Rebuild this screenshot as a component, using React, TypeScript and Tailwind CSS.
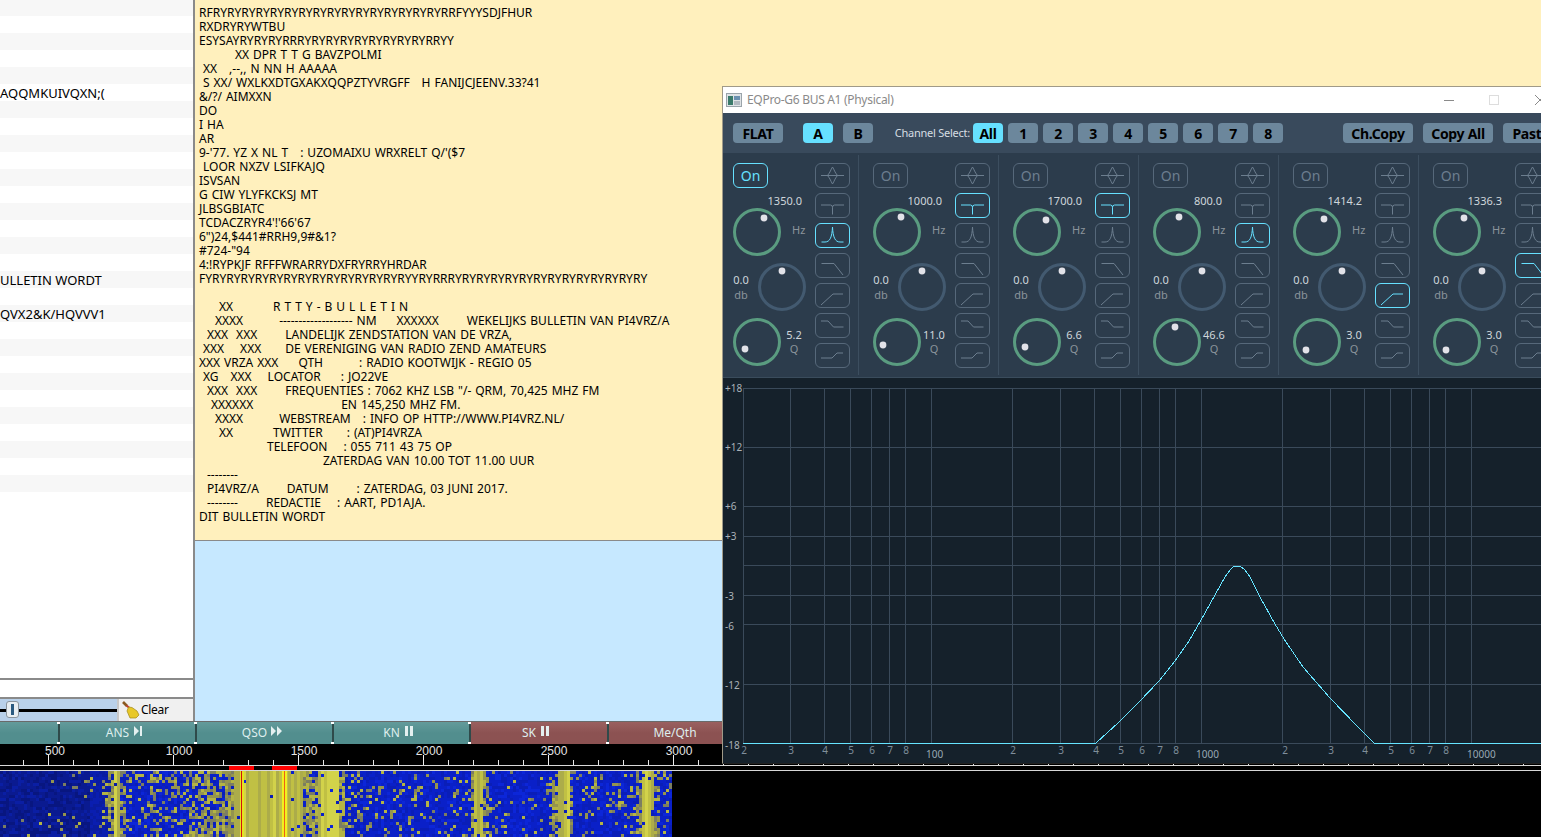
import React from "react";

const font = { fontFamily: '"Noto Sans", "Liberation Sans", Arial, sans-serif' };
const rulerFont = { fontFamily: '"Liberation Sans", Arial, sans-serif' };

const LINES = [
  "RFRYRYRYRYRYRYRYRYRYRYRYRYRYRYRYRYRRFYYYSDJFHUR",
  "RXDRYRYWTBU",
  "ESYSAYRYRYRYRRRYRYRYRYRYRYRYRYRYRRYY",
  "         XX DPR T T G BAVZPOLMI",
  " XX   ,--,, N NN H AAAAA",
  " S XX/ WXLKXDTGXAKXQQPZTYVRGFF   H FANIJCJEENV.33?41",
  "&/?/ AIMXXN",
  "DO",
  "I HA",
  "AR",
  "9-'77. YZ X NL T   : UZOMAIXU WRXRELT Q/'($7",
  " LOOR NXZV LSIFKAJQ",
  "ISVSAN",
  "G CIW YLYFKCKSJ MT",
  "JLBSGBIATC",
  "TCDACZRYR4'!'66'67",
  "6\")24,$441#RRH9,9#&1?",
  "#724-\"94",
  "4:!RYPKJF RFFFWRARRYDXFRYRRYHRDAR",
  "FYRYRYRYRYRYRYRYRYRYRYRYRYRYRYYRYRRRYRYRYRYRYRYRYRYRYRYRYRYRYRY",
  " ",
  "     XX          R T T Y - B U L L E T I N",
  "    XXXX         ------------------- NM     XXXXXX       WEKELIJKS BULLETIN VAN PI4VRZ/A",
  "  XXX  XXX       LANDELIJK ZENDSTATION VAN DE VRZA,",
  " XXX    XXX      DE VERENIGING VAN RADIO ZEND AMATEURS",
  "XXX VRZA XXX     QTH         : RADIO KOOTWIJK - REGIO 05",
  " XG   XXX    LOCATOR     : JO22VE",
  "  XXX  XXX       FREQUENTIES : 7062 KHZ LSB \"/- QRM, 70,425 MHZ FM",
  "   XXXXXX                      EN 145,250 MHZ FM.",
  "    XXXX         WEBSTREAM   : INFO OP HTTP://WWW.PI4VRZ.NL/",
  "     XX          TWITTER      : (AT)PI4VRZA",
  "                 TELEFOON    : 055 711 43 75 OP",
  "                               ZATERDAG VAN 10.00 TOT 11.00 UUR",
  "  --------",
  "  PI4VRZ/A       DATUM       : ZATERDAG, 03 JUNI 2017.",
  "  --------       REDACTIE    : AART, PD1AJA.",
  "DIT BULLETIN WORDT",
];

const ROWS: Record<number, string> = { 5: "AQQMKUIVQXN;(", 16: "ULLETIN WORDT", 18: "QVX2&K/HQVVV1" };

function LeftList() {
  const rows = [];
  for (let i = 0; i < 29; i++) {
    rows.push(
      <div key={i} className={`${i === 0 ? "h-[16px]" : "h-[17px]"} ${i % 2 === 0 ? "bg-[#f7f7f7]" : "bg-white"} text-[13px] leading-[18px] text-black whitespace-pre`}>
        {ROWS[i] || ""}
      </div>
    );
  }
  return <div className="flex-1 bg-white overflow-hidden border-b-2 border-[#8a8a8a]">{rows}</div>;
}

function Broom() {
  return (
    <svg width="18" height="18" viewBox="0 0 18 18" className="shrink-0">
      <path d="M1 1 L5 5" stroke="#8a5a20" strokeWidth="2.6" />
      <path d="M4.5 4.5 L7.5 7" stroke="#c04030" strokeWidth="2.2" />
      <path d="M6.5 6 L5 10 L8 17 L14 17 L17 14 L15 10 L10 6.5 Z" fill="#e8c828" stroke="#a08818" strokeWidth="0.7" />
    </svg>
  );
}

function BarIcon({ kind }: { kind: "skip" | "ff" | "pause" }) {
  return (
    <svg width="12" height="12" viewBox="0 0 12 12" className="ml-[4px] -mt-[5px] shrink-0">
      {kind === "skip" && <path d="M1 1 L6 6 L1 11 Z M7 1 H9 V11 H7 Z" fill="#e4f0f0" />}
      {kind === "ff" && <path d="M0 1 L5 6 L0 11 Z M6 1 L11 6 L6 11 Z" fill="#e4f0f0" />}
      {kind === "pause" && <path d="M1 1 H4 V11 H1 Z M6 1 H9 V11 H6 Z" fill="#e4f0f0" />}
    </svg>
  );
}

function MacroButton({ w, label, icon, red }: { w: string; label?: string; icon?: "skip" | "ff" | "pause"; red?: boolean }) {
  return (
    <div className={`relative ${w} shrink-0 h-full flex items-center justify-center pr-[4px] text-[12px] text-[#dfeeee] border-r-2 border-[#2f4a4a] ${red ? "bg-gradient-to-b from-[#9a6060] via-[#8c5252] to-[#8c5252]" : "bg-gradient-to-b from-[#639b9b] via-[#528e8e] to-[#528e8e]"}`}>
      {label}
      {icon && <BarIcon kind={icon} />}
      <span className="absolute -right-[3px] top-0 w-[4px] h-[2px] bg-white" />
      <span className="absolute -right-[3px] bottom-0 w-[4px] h-[2px] bg-white" />
    </div>
  );
}

function Ruler() {
  const minor = [];
  for (let x = 23; x < 1541; x += 25) minor.push(x);
  const labels = [[55, "500"], [179, "1000"], [304, "1500"], [429, "2000"], [554, "2500"], [679, "3000"]] as const;
  return (
    <svg width="1541" height="21" viewBox="0 744 1541 21" className="block bg-black">
      {minor.map((x) => <line key={x} x1={x + 0.5} x2={x + 0.5} y1="760" y2="765" stroke="#e8e8e8" />)}
      {[48, 173, 298, 423, 548, 673].map((x) => <line key={x} x1={x + 0.5} x2={x + 0.5} y1="755" y2="765" stroke="#f0f0f0" />)}
      {labels.map(([x, t]) => <text key={t} x={x} y="755" textAnchor="middle" fontSize="12" fill="#e4e4e4" style={rulerFont}>{t}</text>)}
    </svg>
  );
}

function mulberry(seed: number) {
  return () => {
    seed |= 0; seed = (seed + 0x6d2b79f5) | 0;
    let t = Math.imul(seed ^ (seed >>> 15), 1 | seed);
    t = (t + Math.imul(t ^ (t >>> 7), 61 | t)) ^ t;
    return ((t ^ (t >>> 14)) >>> 0) / 4294967296;
  };
}

function intensity(x: number) {
  let base = 0.02;
  if (x >= 60 && x < 100) base = 0.05;
  if (x >= 100 && x < 130) base = 0.25;
  if (x >= 130 && x < 150) base = 0.2;
  if (x >= 150 && x < 162) base = 0.42;
  if (x >= 162 && x < 175) base = 0.25;
  if (x >= 175 && x < 232) base = 0.32 + (x - 175) * 0.008;
  if (x >= 232 && x < 302) base = 0.97;
  if (x >= 302 && x < 345) base = 0.72;
  if (x >= 345 && x < 372) base = 0.22;
  if (x >= 372 && x < 470) base = 0.13;
  if (x >= 470 && x < 545) base = 0.1;
  if (x >= 545 && x < 580) base = 0.16;
  if (x >= 580 && x < 635) base = 0.18;
  if (x >= 635 && x < 672) base = 0.2;
  const bands = [[116, 3], [327, 9], [478, 4], [562, 5], [646, 6]];
  for (const [c, w] of bands) {
    const d = Math.abs(x - c);
    if (d <= w) base = 0.97;
    else if (d <= w + 5) base = Math.max(base, 0.6);
  }
  return base;
}

const Waterfall = React.memo(function Waterfall() {
  const r = mulberry(4242);
  const cells = [];
  const cw = 3, ch = 3;
  const cols: number[] = [];
  for (let c = 0; c < 224; c++) cols.push(r());
  for (let j = 0; j < 22; j++) {
    for (let c = 0; c < 224; c++) {
      const x = c * cw;
      const p = intensity(x);
      let fill: string;
      if (r() < p) {
        if (p > 0.9) {
          const v = cols[c];
          fill = v > 0.75 ? "#d2d24a" : v > 0.35 ? "#c0c044" : "#acac4a";
        } else {
          const v = r();
          fill = v > 0.65 ? "#b4b444" : v > 0.3 ? "#94944e" : "#7c7e62";
        }
      } else {
        const v = r();
        if (x < 90) fill = v > 0.75 ? "#0a1ea4" : v > 0.3 ? "#0a1a90" : "#081680";
        else if (x < 120) fill = v > 0.5 ? "#0a1eb0" : "#0a1ca0";
        else fill = v > 0.5 ? "#0a20c8" : v > 0.2 ? "#0a1eb8" : "#0c26d8";
      }
      cells.push(<rect key={j * 1000 + c} x={x} y={j * ch} width={cw} height={ch} fill={fill} />);
    }
  }
  return (
    <svg width="1541" height="66" viewBox="0 0 1541 66" className="block bg-black" shapeRendering="crispEdges">
      {cells}
      <rect x="240" y="0" width="4" height="66" fill="#e4e420" />
      <rect x="282" y="0" width="5" height="66" fill="#f0f020" />
      <rect x="241" y="0" width="1" height="66" fill="#d01010" />
      <rect x="284" y="0" width="1" height="66" fill="#f06010" />
    </svg>
  );
});

const CYAN = "#66e0ff";

function TB({ w, label, active }: { w: string; label: string; active?: boolean }) {
  return (
    <div className={`${w} shrink-0 h-[20px] rounded-[4px] flex items-center justify-center text-[14px] font-bold tracking-[-0.3px] text-black ${active ? "bg-[#66e0ff]" : "bg-[#6c879c]"}`}>
      {label}
    </div>
  );
}

const GLYPHS = [
  "M6 12.5 H29 M17.5 4 C15.5 7 15.5 9 12.5 12.5 C15.5 16 15.5 18 17.5 21 C19.5 18 19.5 16 22.5 12.5 C19.5 9 19.5 7 17.5 4",
  "M6 12 H15.5 Q17.5 12 17.5 14.5 V21.5 M29 12 H19.5 Q17.5 12 17.5 14.5",
  "M6.5 19 H10 C15 19 17 14 17.5 4 C18 14 20 19 25 19 H28.5",
  "M6.5 10.5 H19 L28 22",
  "M6 22 L18 11 H28",
  "M6 8 H13 L18.5 14 H28.5",
  "M6 15 H17 L22 10 H28",
];

function FilterBtn({ i, active }: { i: number; active: boolean }) {
  return (
    <div className={`w-[35px] h-[25px] rounded-[6px] border ${active ? "border-[#66e0ff]" : "border-[#56687a]"}`}>
      <svg width="33" height="23" viewBox="1 1 33 23" className="block">
        <path d={GLYPHS[i]} fill="none" stroke={active ? CYAN : "#6c7e8f"} strokeWidth="1" />
      </svg>
    </div>
  );
}

function Knob({ dx, dy, color }: { dx: number; dy: number; color: string }) {
  return (
    <svg width="48" height="48" viewBox="0 0 48 48" className="block shrink-0">
      <circle cx="24" cy="24" r="22.5" fill="none" stroke={color} strokeWidth="3" />
      <circle cx={24 + dx} cy={24 + dy} r="3.4" fill="#e2e2e8" />
    </svg>
  );
}

const GREEN = "#5a9c80";
const SLATE = "#435a70";

function Band({ on, hz, q, fd, qd, active }: { on?: boolean; hz: string; q: string; fd: [number, number]; qd: [number, number]; active: number }) {
  return (
    <div className="w-[140px] shrink-0 flex pl-[10px] pr-[4px]">
      <div className="w-[117px] flex justify-between pt-[10px]">
        <div className="w-[75px] flex flex-col">
          <div className={`w-[35px] h-[25px] rounded-[6px] border flex items-center justify-center text-[14px] ${on ? "border-[#66e0ff] text-[#66e0ff]" : "border-[#56687a] text-[#6c7e8f]"}`}>On</div>
          <div className="w-[69px] mt-[6px] h-[14px] text-right text-[11px] leading-[14px] text-[#cfd6db]">{hz}</div>
          <div className="flex items-center">
            <Knob dx={fd[0]} dy={fd[1]} color={GREEN} />
            <span className="ml-[11px] -mt-[4px] text-[11px] text-[#8b949b]">Hz</span>
          </div>
          <div className="flex items-center mt-[7px]">
            <div className="w-[16px] flex flex-col items-center text-[11px] leading-[15px] -mt-[1px]">
              <span className="text-[#cfd6db]">0.0</span>
              <span className="text-[#8b949b]">db</span>
            </div>
            <div className="ml-[9px]"><Knob dx={0} dy={-16} color={SLATE} /></div>
          </div>
          <div className="flex items-center mt-[7px]">
            <Knob dx={qd[0]} dy={qd[1]} color={GREEN} />
            <div className="w-[24px] flex flex-col items-center text-[11px] leading-[14px] ml-[1px] -mt-[1px]">
              <span className="text-[#cfd6db] whitespace-pre">{q}</span>
              <span className="text-[#8b949b]">Q</span>
            </div>
          </div>
        </div>
        <div className="flex flex-col gap-[5px]">
          {GLYPHS.map((_, i) => <FilterBtn key={i} i={i} active={i === active} />)}
        </div>
      </div>
      <div className="w-[1px] ml-[8px] my-[2px] bg-[#3c4e5f]" />
    </div>
  );
}

const LX = (f: number) => 931 + 270 * Math.log10(f / 100);

function Chart() {
  const freqs = [30, 40, 50, 60, 70, 80, 100, 200, 300, 400, 500, 600, 700, 800, 1000, 2000, 3000, 4000, 5000, 6000, 7000, 8000, 10000];
  const ys: [number, string, number][] = [[388, "+18", 388], [447, "+12", 447], [506, "+6", 506], [536, "+3", 536], [565, "", 0], [595, "-3", 596], [624, "-6", 626], [684, "-12", 685], [743, "-18", 745]];
  const digits: [number, string][] = [
    [744, "2"], [791, "3"], [825, "4"], [851, "5"], [872, "6"], [890, "7"], [906, "8"],
    [1013, "2"], [1061, "3"], [1096, "4"], [1121, "5"], [1142, "6"], [1160, "7"], [1176, "8"],
    [1285, "2"], [1331, "3"], [1365, "4"], [1391, "5"], [1412, "6"], [1430, "7"], [1446, "8"],
  ];
  const curve = "M743 743 H1096 L1118 723 L1140 701 L1159 681 L1175 661 L1189 641 L1201 620 L1215 595 L1225 577 L1230 570 L1234 566 H1240 L1245 570 L1250 577 L1260 597 L1275 624 L1284 639 L1303 667 L1330 698 L1357 726 L1374 743 H1541";
  return (
    <svg width="818" height="385" viewBox="723 378 818 385" className="block">
      {ys.map(([y]) => <line key={y} x1="743" x2="1541" y1={y + 0.5} y2={y + 0.5} stroke="#3a4a5a" />)}
      <line x1="743.5" x2="743.5" y1="388" y2="743" stroke="#3a4a5a" />
      {freqs.map((f) => <line key={f} x1={Math.round(LX(f)) + 0.5} x2={Math.round(LX(f)) + 0.5} y1="388" y2="743" stroke="#3a4a5a" />)}
      <path d={curve} fill="none" stroke="#66e4ff" strokeWidth="1" shapeRendering="crispEdges" />
      {ys.filter(([, t]) => t).map(([y, t, ly]) => (
        <text key={y} x="725" y={ly + 3.5} fontSize="10" fill="#aab2b8" style={font}>{t}</text>
      ))}
      {digits.map(([x, t]) => <text key={x} x={x} y="753.5" textAnchor="middle" fontSize="10" fill="#7f8e9b" style={font}>{t}</text>)}
      <text x="926" y="758" fontSize="10" fill="#98a8b4" style={font}>100</text>
      <text x="1196" y="758" fontSize="10" fill="#98a8b4" style={font}>1000</text>
      <text x="1467" y="758" fontSize="10" fill="#98a8b4" style={font}>10000</text>
    </svg>
  );
}

function EQWindow() {
  return (
    <div style={font} className="absolute left-[722px] top-[86px] w-[860px] h-[678px] border border-[#a09a88] border-b-[#222222] bg-[#15212b] overflow-hidden">
      <div className="h-[26px] bg-white flex items-center text-[12px] text-[#8a8a8a]">
        <div className="w-[721px] flex items-center pl-[3px]">
          <svg width="16" height="14" viewBox="0 0 16 14" className="shrink-0">
            <rect x="0.5" y="0.5" width="15" height="13" fill="#dfe3e6" stroke="#9aa4aa" />
            <rect x="2" y="3" width="5" height="9" fill="#3a7a6a" />
            <rect x="8" y="3" width="6" height="4" fill="#6a90b0" />
            <rect x="8" y="8" width="6" height="4" fill="#b0b8c0" />
          </svg>
          <span className="ml-[5px] tracking-[-0.3px]">EQPro-G6 BUS A1 (Physical)</span>
        </div>
        <div className="w-[10px] h-[1px] bg-[#8a8a8a]" />
        <div className="ml-[35px] w-[10px] h-[10px] border border-[#dddddd]" />
        <svg width="10" height="10" viewBox="0 0 10 10" className="ml-[36px] shrink-0">
          <path d="M0 0 L10 10 M0 10 L10 0" stroke="#8a8a8a" strokeWidth="1" />
        </svg>
      </div>
      <div className="h-[40px] bg-[#394a5c] flex items-center pl-[10px]">
        <TB w="w-[50px]" label="FLAT" />
        <div className="w-[20px] shrink-0" />
        <TB w="w-[30px]" label="A" active />
        <div className="w-[10px] shrink-0" />
        <TB w="w-[30px]" label="B" />
        <div className="w-[100px] shrink-0 text-[11px] text-[#d6dde2] text-right pr-[3px] whitespace-nowrap tracking-[-0.25px]">Channel Select:</div>
        <div className="flex gap-[5px] shrink-0">
          <TB w="w-[30px]" label="All" active />
          {["1", "2", "3", "4", "5", "6", "7", "8"].map((t) => <TB key={t} w="w-[30px]" label={t} />)}
        </div>
        <div className="w-[60px] shrink-0" />
        <div className="flex gap-[10px] shrink-0">
          <TB w="w-[70px]" label="Ch.Copy" />
          <TB w="w-[70px]" label="Copy All" />
          <TB w="w-[56px]" label="Paste" />
        </div>
      </div>
      <div className="h-[225px] bg-[#2c3c4c] flex border-b border-[#3a4c5c]">
        <Band on hz="1350.0" q="5.2" fd={[7, -14]} qd={[-12, 7]} active={2} />
        <Band hz="1000.0" q="11.0" fd={[4, -15]} qd={[-14, 3]} active={1} />
        <Band hz="1700.0" q="6.6" fd={[9, -12]} qd={[-12, 5]} active={1} />
        <Band hz="800.0" q="46.6" fd={[2, -15]} qd={[-2, -15]} active={2} />
        <Band hz="1414.2" q="3.0" fd={[7, -13]} qd={[-11, 8]} active={4} />
        <Band hz="1336.3" q="3.0" fd={[7, -14]} qd={[-11, 8]} active={3} />
      </div>
      <Chart />
    </div>
  );
}

export default function App() {
  return (
    <div style={font} className="relative w-[1541px] h-[837px] overflow-hidden bg-black flex flex-col">
      <div className="h-[721px] flex">
        <div className="w-[195px] shrink-0 flex flex-col border-r-2 border-[#8a8a8a] bg-white">
          <LeftList />
          <div className="h-[19px] bg-white border-b-2 border-[#8a8a8a]" />
          <div className="h-[22px] flex">
            <div className="w-[118px] bg-[#b9d1ea] flex items-center relative border-r border-[#c8c8c8]">
              <div className="w-full h-[3px] bg-black" />
              <div className="absolute left-[6px] top-[2px] w-[13px] h-[17px] rounded-[3px] bg-[#e8eef2] border border-[#8a949c] flex justify-center">
                <div className="w-[3px] my-[2px] bg-[#2a5a80]" />
              </div>
            </div>
            <div className="flex-1 bg-[#f0f0f0] border-l border-[#c8c8c8] flex items-center pl-[3px] text-[12px] text-black tracking-[-0.3px]">
              <Broom />
              <span className="ml-[1px]">Clear</span>
            </div>
          </div>
        </div>
        <div className="flex-1 flex flex-col">
          <div className="h-[541px] bg-[#fff0bd] border-b border-[#8a8a8a] pt-[6px] pl-[4px] text-[12px] leading-[14px] text-black whitespace-pre [word-spacing:0.88px] overflow-hidden">
            {LINES.map((l, i) => <div key={i} className="h-[14px]">{l}</div>)}
          </div>
          <div className="flex-1 bg-[#c6e8ff]" />
        </div>
      </div>
      <div className="h-[23px] flex border-t border-[#6a6a6a] bg-[#528e8e] overflow-hidden">
        <MacroButton w="w-[60px]" />
        <MacroButton w="w-[137px]" label="ANS" icon="skip" />
        <MacroButton w="w-[137px]" label="QSO" icon="ff" />
        <MacroButton w="w-[137px]" label="KN" icon="pause" />
        <MacroButton w="w-[138px]" label="SK" icon="pause" red />
        <MacroButton w="w-[138px]" label="Me/Qth" red />
        <div className="flex-1 bg-black" />
      </div>
      <Ruler />
      <div className="h-[1px] bg-[#d8d8d8]" />
      <div className="h-[4px] bg-black flex">
        <div className="w-[229px]" />
        <div className="w-[25px] bg-[#ff0000]" />
        <div className="w-[18px]" />
        <div className="w-[25px] bg-[#ff0000]" />
      </div>
      <div className="h-[1px] bg-[#d8d8d8]" />
      <Waterfall />
      <EQWindow />
    </div>
  );
}
